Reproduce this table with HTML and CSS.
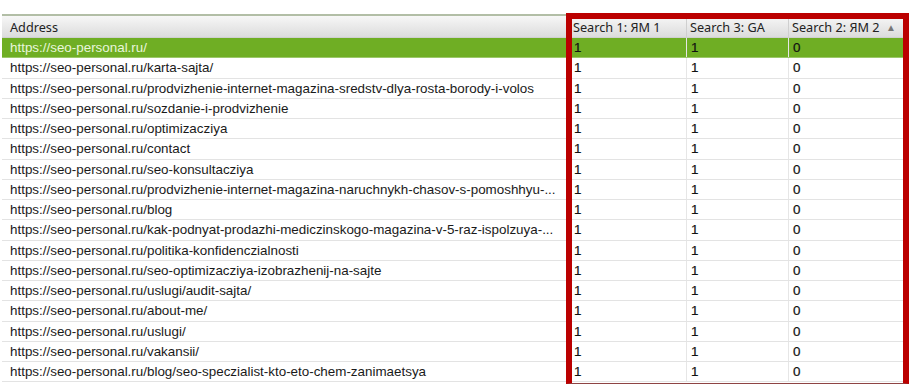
FILE: index.html
```html
<!DOCTYPE html>
<html>
<head>
<meta charset="utf-8">
<link rel="stylesheet" href="styles.css">
</head>
<body>
<div class="page">
  <div class="table">
    <div class="row head">
      <div class="cell addr">Address</div>
      <div class="cell">Search 1: ЯМ 1</div>
      <div class="cell">Search 3: GA</div>
      <div class="cell sorted">Search 2: ЯМ 2 <span class="arrow">▲</span></div>
    </div>
    <div class="row sel"><div class="cell addr">https://seo-personal.ru/</div><div class="cell n">1</div><div class="cell n">1</div><div class="cell n">0</div></div>
    <div class="row"><div class="cell addr">https://seo-personal.ru/karta-sajta/</div><div class="cell n">1</div><div class="cell n">1</div><div class="cell n">0</div></div>
    <div class="row"><div class="cell addr">https://seo-personal.ru/prodvizhenie-internet-magazina-sredstv-dlya-rosta-borody-i-volos</div><div class="cell n">1</div><div class="cell n">1</div><div class="cell n">0</div></div>
    <div class="row"><div class="cell addr">https://seo-personal.ru/sozdanie-i-prodvizhenie</div><div class="cell n">1</div><div class="cell n">1</div><div class="cell n">0</div></div>
    <div class="row"><div class="cell addr">https://seo-personal.ru/optimizacziya</div><div class="cell n">1</div><div class="cell n">1</div><div class="cell n">0</div></div>
    <div class="row"><div class="cell addr">https://seo-personal.ru/contact</div><div class="cell n">1</div><div class="cell n">1</div><div class="cell n">0</div></div>
    <div class="row"><div class="cell addr">https://seo-personal.ru/seo-konsultacziya</div><div class="cell n">1</div><div class="cell n">1</div><div class="cell n">0</div></div>
    <div class="row"><div class="cell addr">https://seo-personal.ru/prodvizhenie-internet-magazina-naruchnykh-chasov-s-pomoshhyu-...</div><div class="cell n">1</div><div class="cell n">1</div><div class="cell n">0</div></div>
    <div class="row"><div class="cell addr">https://seo-personal.ru/blog</div><div class="cell n">1</div><div class="cell n">1</div><div class="cell n">0</div></div>
    <div class="row"><div class="cell addr">https://seo-personal.ru/kak-podnyat-prodazhi-mediczinskogo-magazina-v-5-raz-ispolzuya-...</div><div class="cell n">1</div><div class="cell n">1</div><div class="cell n">0</div></div>
    <div class="row"><div class="cell addr">https://seo-personal.ru/politika-konfidenczialnosti</div><div class="cell n">1</div><div class="cell n">1</div><div class="cell n">0</div></div>
    <div class="row"><div class="cell addr">https://seo-personal.ru/seo-optimizacziya-izobrazhenij-na-sajte</div><div class="cell n">1</div><div class="cell n">1</div><div class="cell n">0</div></div>
    <div class="row"><div class="cell addr">https://seo-personal.ru/uslugi/audit-sajta/</div><div class="cell n">1</div><div class="cell n">1</div><div class="cell n">0</div></div>
    <div class="row"><div class="cell addr">https://seo-personal.ru/about-me/</div><div class="cell n">1</div><div class="cell n">1</div><div class="cell n">0</div></div>
    <div class="row"><div class="cell addr">https://seo-personal.ru/uslugi/</div><div class="cell n">1</div><div class="cell n">1</div><div class="cell n">0</div></div>
    <div class="row"><div class="cell addr">https://seo-personal.ru/vakansii/</div><div class="cell n">1</div><div class="cell n">1</div><div class="cell n">0</div></div>
    <div class="row"><div class="cell addr">https://seo-personal.ru/blog/seo-speczialist-kto-eto-chem-zanimaetsya</div><div class="cell n">1</div><div class="cell n">1</div><div class="cell n">0</div></div>
  </div>
  <div class="highlight"></div>
</div>
</body>
</html>
```

FILE: styles.css
```css
* { box-sizing: border-box; }
html, body { margin: 0; padding: 0; background: #fff; }
body { width: 920px; height: 391px; overflow: hidden; }
.page { position: relative; padding: 14px 0 0 2px; }
.table { width: 902px; border-top: 2px solid #b2bea6; }
.row {
  display: grid;
  grid-template-columns: 568px 117px 102px 115px;
  height: 20.25px;
  border-bottom: 1px solid #e3e3e3;
  font-family: "Liberation Sans", Arial, sans-serif;
  font-size: 13.4px;
  color: #1a1a1a;
}
.cell {
  padding-left: 4px;
  line-height: 20px;
  white-space: nowrap;
  overflow: hidden;
  border-right: 1px solid #e6e6e6;
}
.cell.addr { padding-left: 8px; }
.cell.n { color: #111; -webkit-text-stroke: 0.2px #111; }
.head {
  height: 22px;
  background: linear-gradient(#f7f7f7, #e8e8e8 55%, #dcdcdc);
  border-bottom: 1px solid #d0d0d0;
  font-family: "Noto Sans", "Open Sans", sans-serif;
  font-size: 12.7px;
  color: #222;
}
.head .cell { line-height: 22px; border-right: 1px solid #cfcfcf; padding-left: 3px; }
.head .cell.addr { padding-left: 8px; }
.arrow { font-size: 10px; color: #777; margin-left: 3px; vertical-align: 1px; }
.sel { background: #6fae24; border-bottom-color: #9cc86a; }
.sel .cell.addr { color: #e9f6dc; }
.highlight {
  position: absolute;
  left: 566px;
  top: 13px;
  width: 343px;
  height: 371px;
  border: 6px solid #bb0000;
  border-bottom: 1px solid #8e4444;
}
```
